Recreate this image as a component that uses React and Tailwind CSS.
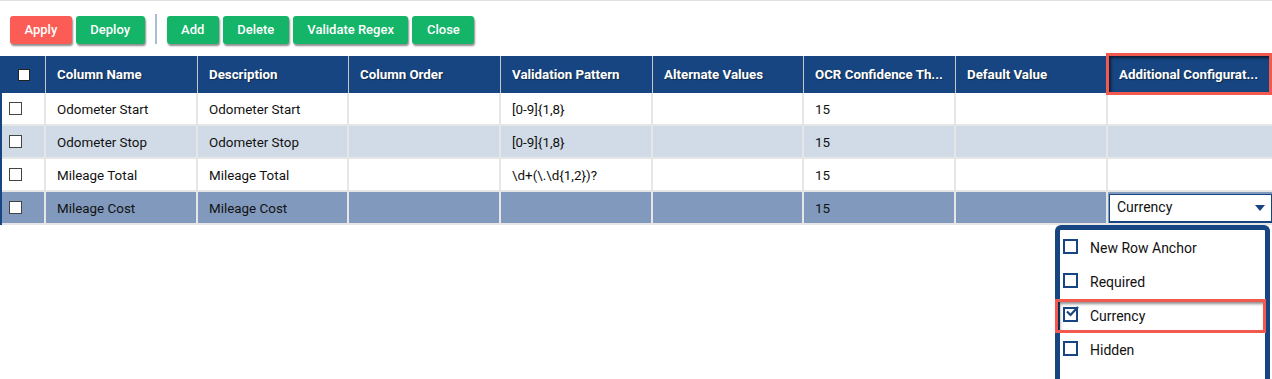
const cols = [
  { key: 'name', label: 'Column Name', w: 'w-[152px]' },
  { key: 'desc', label: 'Description', w: 'w-[151px]' },
  { key: 'order', label: 'Column Order', w: 'w-[152px]' },
  { key: 'pattern', label: 'Validation Pattern', w: 'w-[152px]' },
  { key: 'alt', label: 'Alternate Values', w: 'w-[151px]' },
  { key: 'ocr', label: 'OCR Confidence Th...', w: 'w-[152px]' },
  { key: 'def', label: 'Default Value', w: 'w-[152px]' },
]

const rows = [
  { name: 'Odometer Start', desc: 'Odometer Start', pattern: '[0-9]{1,8}', ocr: '15', bg: 'bg-white' },
  { name: 'Odometer Stop', desc: 'Odometer Stop', pattern: '[0-9]{1,8}', ocr: '15', bg: 'bg-[#d0dbe7]' },
  { name: 'Mileage Total', desc: 'Mileage Total', pattern: '\\d+(\\.\\d{1,2})?', ocr: '15', bg: 'bg-white' },
  { name: 'Mileage Cost', desc: 'Mileage Cost', pattern: '', ocr: '15', bg: 'bg-[#8199bd]', selected: true },
]

const options = [
  { label: 'New Row Anchor' },
  { label: 'Required' },
  { label: 'Currency', checked: true },
  { label: 'Hidden' },
]

function Btn({ children, red }) {
  return (
    <button
      className={`h-[28px] px-[14.5px] rounded-[3px] text-white text-[13px] font-medium shadow-[1px_2px_2px_rgba(0,0,0,0.45)] ${
        red ? 'bg-[#fb5c55]' : 'bg-[#14b469]'
      }`}
    >
      {children}
    </button>
  )
}

export default function App() {
  return (
    <div className="w-[1272px] h-[379px] bg-white border-t border-[#e0e0e0] overflow-hidden font-['Roboto',sans-serif] text-[13.4px] text-[#111]">
      {/* toolbar */}
      <div className="flex items-start gap-[4px] pl-[10px] pt-[15px] h-[55px]">
        <Btn red>Apply</Btn>
        <Btn>Deploy</Btn>
        <div className="w-[2px] h-[30px] bg-[#a9bdd6] mx-[6px] -mt-[2px]" />
        <Btn>Add</Btn>
        <Btn>Delete</Btn>
        <Btn>Validate Regex</Btn>
        <Btn>Close</Btn>
      </div>

      {/* grid */}
      <div className="border-l-2 border-[#174581]">
        <div className="flex h-[37px] bg-[#174581] text-white font-bold text-[13.3px] whitespace-nowrap">
          <div className="w-[44px] flex items-center justify-center border-r border-[#c7c7c7]">
            <span className="inline-block w-[12px] h-[12px] bg-white border border-[#222] mt-[1px]" />
          </div>
          {cols.map(c => (
            <div key={c.key} className={`${c.w} flex items-center px-[11px] overflow-hidden border-r border-[#c7c7c7] [text-shadow:1px_1px_1px_rgba(0,0,0,0.4)]`}>
              {c.label}
            </div>
          ))}
          <div className="relative flex-1 flex items-center px-[11px] [text-shadow:1px_1px_1px_rgba(0,0,0,0.4)]">
            Additional Configurat...
            <div className="absolute -left-[2px] -top-[3px] right-0 -bottom-[2px] border-[3px] border-[#f25a4f] shadow-[inset_2px_2px_3px_rgba(0,0,0,0.6)]" />
          </div>
        </div>

        {rows.map((r, i) => (
          <div key={i} className={`flex h-[33px] ${r.bg} border-b-2 border-[#e6e6e6]`}>
            <div className="w-[44px] flex items-center pl-[7px] pb-[1px] border-r-2 border-[#e6e6e6]">
              <span className="inline-block w-[13px] h-[13px] bg-white border border-[#444]" />
            </div>
            {cols.map(c => (
              <div key={c.key} className={`${c.w} flex items-center px-[11px] pt-[3px] border-r-2 border-[#e6e6e6]`}>
                {r[c.key] || ''}
              </div>
            ))}
            <div className="flex-1 flex items-center">
              {r.selected && (
                <div className="w-full h-[29px] ml-[1px] mt-[1px] bg-white border border-[#174581] border-b-2 flex items-center justify-between pl-[7px] pr-[6px] text-[14px]">
                  <span>Currency</span>
                  <svg width="10" height="6" viewBox="0 0 10 6"><path d="M0 0h10L5 6z" fill="#174581" /></svg>
                </div>
              )}
            </div>
          </div>
        ))}
      </div>

      {/* dropdown panel */}
      <div className="flex justify-end pr-[2px]">
        <div className="w-[215px] h-[160px] border-[5px] border-b-0 border-[#174581] rounded-t-[6px] bg-white pt-[1px]">
          {options.map(o => (
            <div key={o.label} className="relative flex items-center h-[34px] pl-[3px] text-[14px]">
              <span className="relative inline-block w-[15px] h-[15px] border-2 border-[#174581] mr-[12px] -mt-[4px]">
                {o.checked && (
                  <svg className="absolute -top-[3px] left-0" width="14" height="12" viewBox="0 0 14 12">
                    <path d="M2 5.5 L5.5 9 L13 1" stroke="#174581" strokeWidth="2.2" fill="none" />
                  </svg>
                )}
              </span>
              <span>{o.label}</span>
              {o.checked && (
                <div className="absolute -left-[5px] top-0 -right-[1px] bottom-0 border-[3px] border-[#f25a4f] shadow-[inset_2px_2px_3px_rgba(0,0,0,0.45)]" />
              )}
            </div>
          ))}
        </div>
      </div>
    </div>
  )
}
